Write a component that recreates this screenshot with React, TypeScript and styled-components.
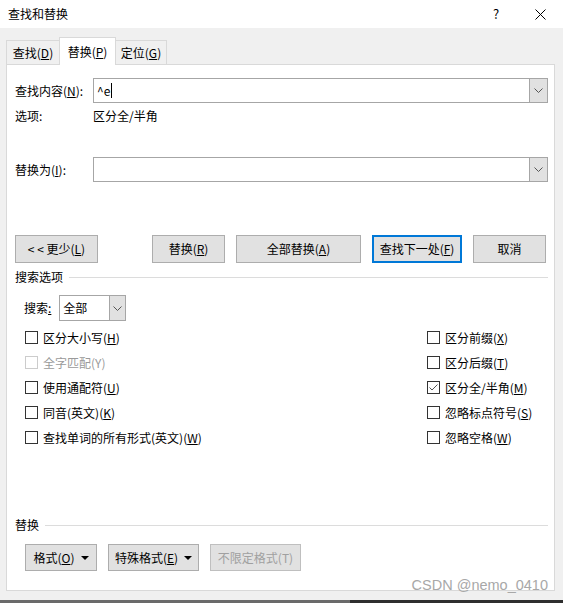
import React from "react";
import styled, { createGlobalStyle } from "styled-components";

const Global = createGlobalStyle`
  html, body { margin: 0; padding: 0; background: #f0f0f0; }
  body {
    font-family: "Microsoft YaHei UI", "Noto Sans CJK SC", "Noto Sans", sans-serif;
    font-size: 12px;
    color: #000;
  }
  * { box-sizing: border-box; }
`;

const Window = styled.div`
  width: 563px;
  height: 603px;
  display: flex;
  flex-direction: column;
  background: #f0f0f0;
  position: relative;
  overflow: hidden;
`;

const TitleBar = styled.div`
  height: 28px;
  flex-shrink: 0;
  background: #fff;
  display: flex;
  align-items: center;
  padding-left: 8px;
`;

const Title = styled.div`
  flex: 1;
  line-height: 16px;
`;

const HelpButton = styled.div`
  width: 14px;
  text-align: center;
  font-size: 13px;
  line-height: 16px;
  margin-right: 31px;
`;

const CloseButton = styled.div`
  width: 12px;
  height: 12px;
  margin-right: 17px;
  display: flex;
  align-items: center;
  justify-content: center;
`;

const Body = styled.div`
  flex: 1;
  display: flex;
  flex-direction: column;
  padding: 9px 8px 9px 6px;
`;

const TabRow = styled.div`
  display: flex;
  align-items: flex-end;
  height: 28px;
  margin-bottom: -1px;
  position: relative;
  z-index: 1;
`;

const Tab = styled.div<{ $active?: boolean; $w: number }>`
  width: ${(p) => p.$w}px;
  height: ${(p) => (p.$active ? 28 : 24)}px;
  margin-bottom: ${(p) => (p.$active ? 0 : 1)}px;
  background: ${(p) => (p.$active ? "#fff" : "#f0f0f0")};
  border: 1px solid #d9d9d9;
  border-bottom: none;
  margin-left: -1px;
  &:first-child { margin-left: 0; }
  display: flex;
  align-items: center;
  justify-content: center;
  line-height: 16px;
  padding-top: ${(p) => (p.$active ? 0 : 1)}px;
`;

const U = styled.span`
  text-decoration: underline;
  text-underline-offset: 1px;
`;

const Panel = styled.div`
  height: 527px;
  background: #fff;
  border: 1px solid #d9d9d9;
  display: flex;
  flex-direction: column;
  padding: 0 6px 19px 8px;
`;

const FieldRow = styled.div<{ $mt: number }>`
  display: flex;
  align-items: center;
  margin-top: ${(p) => p.$mt}px;
  height: 25px;
`;

const InfoRow = styled.div<{ $mt: number }>`
  display: flex;
  align-items: center;
  margin-top: ${(p) => p.$mt}px;
  height: 16px;
  line-height: 16px;
`;

const FieldLabel = styled.div`
  width: 78px;
  flex-shrink: 0;
  line-height: 16px;
  white-space: nowrap;
`;

const Combo = styled.div<{ $w?: number; $h: number }>`
  ${(p) => (p.$w ? `width: ${p.$w}px; flex-shrink: 0;` : "flex: 1;")}
  height: ${(p) => p.$h}px;
  border: 1px solid #a6a6a6;
  background: #fff;
  display: flex;
`;

const ComboText = styled.div`
  flex: 1;
  display: flex;
  align-items: center;
  padding-left: 3px;
  line-height: 16px;
`;

const Caret = styled.span`
  display: inline-block;
  width: 1px;
  height: 15px;
  background: #000;
  margin-left: 1px;
`;

const DropButton = styled.div<{ $w: number }>`
  width: ${(p) => p.$w}px;
  flex-shrink: 0;
  background: #e1e1e1;
  border-left: 1px solid #a6a6a6;
  display: flex;
  align-items: center;
  justify-content: center;
`;

const ButtonRow = styled.div<{ $mt: number; $pl: number }>`
  display: flex;
  margin-top: ${(p) => p.$mt}px;
  padding-left: ${(p) => p.$pl}px;
  gap: 11px;
`;

const Button = styled.div<{ $w: number; $h: number; $default?: boolean; $disabled?: boolean; $gapAfter?: number }>`
  width: ${(p) => p.$w}px;
  height: ${(p) => p.$h}px;
  background: #e1e1e1;
  border: ${(p) =>
    p.$default ? "2px solid #0078d7" : p.$disabled ? "1px solid #bfbfbf" : "1px solid #adadad"};
  color: ${(p) => (p.$disabled ? "#a0a0a0" : "#000")};
  display: flex;
  align-items: center;
  justify-content: center;
  line-height: 16px;
  white-space: nowrap;
  margin-right: ${(p) => p.$gapAfter ?? 0}px;
`;

const ButtonLabel = styled.span`
  white-space: nowrap;
`;

const MenuArrow = styled.svg`
  margin-left: 6px;
  flex-shrink: 0;
`;

const SectionHeader = styled.div<{ $mt: number }>`
  display: flex;
  align-items: center;
  gap: 6px;
  margin-top: ${(p) => p.$mt}px;
  height: 16px;
  line-height: 16px;
  &::after {
    content: "";
    flex: 1;
    height: 1px;
    background: #dcdcdc;
  }
`;

const SearchRow = styled.div`
  display: flex;
  align-items: center;
  margin-top: 10px;
  padding-left: 9px;
  height: 26px;
  gap: 8px;
`;

const SearchLabel = styled.div`
  line-height: 16px;
`;

const CheckGrid = styled.div`
  display: grid;
  grid-template-columns: 402px 1fr;
  grid-auto-flow: column;
  grid-template-rows: repeat(5, 25px);
  margin-top: 4px;
  padding-left: 10px;
`;

const CheckItem = styled.div<{ $disabled?: boolean }>`
  display: flex;
  align-items: center;
  gap: 5px;
  color: ${(p) => (p.$disabled ? "#9a9a9a" : "#000")};
  line-height: 16px;
  white-space: nowrap;
`;

const Box = styled.div<{ $disabled?: boolean }>`
  width: 13px;
  height: 13px;
  flex-shrink: 0;
  border: 1px solid ${(p) => (p.$disabled ? "#cccccc" : "#333")};
  background: #fff;
  display: flex;
  align-items: center;
  justify-content: center;
`;

const ReplaceSection = styled.div`
  margin-top: auto;
  display: flex;
  flex-direction: column;
`;

const BottomLine = styled.div`
  height: 3px;
  flex-shrink: 0;
  background: linear-gradient(to right, #6a6a6a 0 350px, #2e2e2e 350px);
`;

const Watermark = styled.div`
  position: absolute;
  right: 15px;
  top: 577px;
  font-family: "Liberation Sans", Arial, sans-serif;
  font-size: 14.5px;
  line-height: 16px;
  color: #a8a8a8;
  white-space: nowrap;
`;

const Chevron = () => (
  <svg width="9" height="5" viewBox="0 0 9 5">
    <path d="M0.5 0.5 L4.5 4.5 L8.5 0.5" stroke="#555" strokeWidth="1" fill="none" />
  </svg>
);

const Triangle = () => (
  <MenuArrow width="8" height="4" viewBox="0 0 8 4">
    <path d="M0 0 H8 L4 4 Z" fill="#000" />
  </MenuArrow>
);

const CheckMark = () => (
  <svg width="11" height="11" viewBox="0 0 11 11">
    <path d="M1.5 5.5 L4 8 L9.5 2.5" stroke="#555" strokeWidth="1" fill="none" />
  </svg>
);

type Opt = { label: string; key?: string; suffix?: string; checked?: boolean; disabled?: boolean };

const Check = ({ o }: { o: Opt }) => (
  <CheckItem $disabled={o.disabled}>
    <Box $disabled={o.disabled}>{o.checked && <CheckMark />}</Box>
    <span>
      {o.label}
      {o.key ? (
        <>
          (<U>{o.key}</U>)
        </>
      ) : (
        o.suffix
      )}
    </span>
  </CheckItem>
);

const options: Opt[] = [
  { label: "区分大小写", key: "H" },
  { label: "全字匹配", suffix: "(Y)", disabled: true },
  { label: "使用通配符", key: "U" },
  { label: "同音(英文)", key: "K" },
  { label: "查找单词的所有形式(英文)", key: "W" },
  { label: "区分前缀", key: "X" },
  { label: "区分后缀", key: "T" },
  { label: "区分全/半角", key: "M", checked: true },
  { label: "忽略标点符号", key: "S" },
  { label: "忽略空格", key: "W" },
];

export default function App() {
  return (
    <>
      <Global />
      <Window>
        <TitleBar>
          <Title>查找和替换</Title>
          <HelpButton>?</HelpButton>
          <CloseButton>
            <svg width="11" height="11" viewBox="0 0 11 11">
              <path d="M0.5 0.5 L10.5 10.5 M10.5 0.5 L0.5 10.5" stroke="#000" strokeWidth="1" />
            </svg>
          </CloseButton>
        </TitleBar>
        <Body>
          <TabRow>
            <Tab $w={54}>
              <span>查找(<U>D</U>)</span>
            </Tab>
            <Tab $w={57} $active>
              <span>替换(<U>P</U>)</span>
            </Tab>
            <Tab $w={52}>
              <span>定位(<U>G</U>)</span>
            </Tab>
          </TabRow>
          <Panel>
            <FieldRow $mt={13}>
              <FieldLabel>
                查找内容(<U>N</U>):
              </FieldLabel>
              <Combo $h={25}>
                <ComboText>
                  ^e<Caret />
                </ComboText>
                <DropButton $w={18}>
                  <Chevron />
                </DropButton>
              </Combo>
            </FieldRow>
            <InfoRow $mt={5}>
              <FieldLabel>选项:</FieldLabel>
              <span>区分全/半角</span>
            </InfoRow>
            <FieldRow $mt={33}>
              <FieldLabel>
                替换为(<U>I</U>):
              </FieldLabel>
              <Combo $h={25}>
                <ComboText />
                <DropButton $w={18}>
                  <Chevron />
                </DropButton>
              </Combo>
            </FieldRow>
            <ButtonRow $mt={53} $pl={0}>
              <Button $w={83} $h={28} $gapAfter={43}>
                <ButtonLabel>&lt; &lt; 更少(<U>L</U>)</ButtonLabel>
              </Button>
              <Button $w={73} $h={28}>
                <ButtonLabel>替换(<U>R</U>)</ButtonLabel>
              </Button>
              <Button $w={125} $h={28}>
                <ButtonLabel>全部替换(<U>A</U>)</ButtonLabel>
              </Button>
              <Button $w={90} $h={28} $default>
                <ButtonLabel>查找下一处(<U>F</U>)</ButtonLabel>
              </Button>
              <Button $w={73} $h={28}>
                <ButtonLabel>取消</ButtonLabel>
              </Button>
            </ButtonRow>
            <SectionHeader $mt={6}>搜索选项</SectionHeader>
            <SearchRow>
              <SearchLabel>
                搜索<U>:</U>
              </SearchLabel>
              <Combo $w={67} $h={26}>
                <ComboText>全部</ComboText>
                <DropButton $w={16}>
                  <Chevron />
                </DropButton>
              </Combo>
            </SearchRow>
            <CheckGrid>
              {options.map((o, i) => (
                <Check key={i} o={o} />
              ))}
            </CheckGrid>
            <ReplaceSection>
              <SectionHeader $mt={0}>替换</SectionHeader>
              <ButtonRow $mt={11} $pl={10}>
                <Button $w={72} $h={27}>
                  <ButtonLabel>格式(<U>O</U>)</ButtonLabel>
                  <Triangle />
                </Button>
                <Button $w={91} $h={27}>
                  <ButtonLabel>特殊格式(<U>E</U>)</ButtonLabel>
                  <Triangle />
                </Button>
                <Button $w={91} $h={27} $disabled>
                  <ButtonLabel>不限定格式(T)</ButtonLabel>
                </Button>
              </ButtonRow>
            </ReplaceSection>
          </Panel>
        </Body>
        <BottomLine />
        <Watermark>CSDN @nemo_0410</Watermark>
      </Window>
    </>
  );
}
